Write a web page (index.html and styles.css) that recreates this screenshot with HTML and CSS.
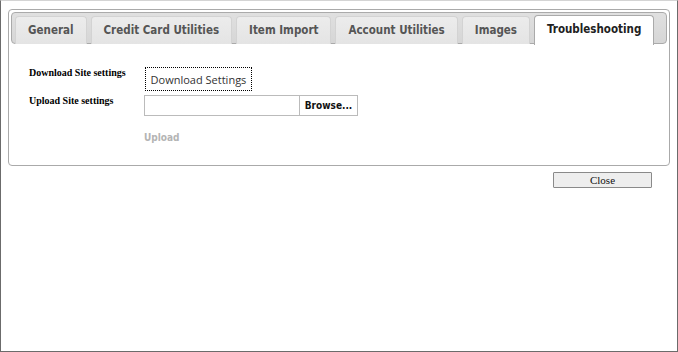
FILE: index.html
```html
<!DOCTYPE html>
<html>
<head>
<meta charset="utf-8">
<link rel="stylesheet" href="styles.css">
</head>
<body>
<div class="window">
  <div class="widget">
    <ul class="tabnav">
      <li class="tab">General</li>
      <li class="tab">Credit Card Utilities</li>
      <li class="tab">Item Import</li>
      <li class="tab">Account Utilities</li>
      <li class="tab">Images</li>
      <li class="tab active">Troubleshooting</li>
    </ul>
    <div class="panel">
      <div class="row">
        <div class="label">Download Site settings</div>
        <button class="dl-btn">Download Settings</button>
      </div>
      <div class="row">
        <div class="label">Upload Site settings</div>
        <div class="file">
          <span class="file-box"></span>
          <span class="browse">Browse...</span>
        </div>
      </div>
      <div class="row">
        <div class="label"></div>
        <span class="upload">Upload</span>
      </div>
    </div>
  </div>
  <div class="footer">
    <button class="close-btn">Close</button>
  </div>
</div>
</body>
</html>
```
FILE: styles.css
```css
html, body {
  margin: 0;
  padding: 0;
  background: #fff;
}
.window {
  box-sizing: border-box;
  width: 678px;
  height: 352px;
  border: 1px solid #6b6b6b;
  border-top-color: #d4d4d4;
  padding: 8px 7px 0 7px;
}
.widget {
  box-sizing: border-box;
  width: 662px;
  height: 157px;
  border: 1px solid #aaa;
  border-radius: 4px;
  padding: 2px;
}
.tabnav {
  box-sizing: border-box;
  list-style: none;
  margin: 0;
  height: 32px;
  padding: 3px 3px 0 3px;
  border: 1px solid #aaa;
  border-radius: 4px;
  background: linear-gradient(#e0e0e0, #d6d6d6);
  display: flex;
  gap: 4px;
  align-items: flex-start;
}
.tab {
  box-sizing: border-box;
  height: 28px;
  margin-bottom: -1px;
  padding: 0 12px;
  border: 1px solid #d3d3d3;
  border-bottom: 0;
  border-radius: 4px 4px 0 0;
  background: linear-gradient(#ececec, #e4e4e4);
  color: #555;
  font-family: "DejaVu Sans Condensed", "DejaVu Sans", sans-serif;
  font-stretch: condensed;
  font-weight: bold;
  font-size: 11.5px;
  line-height: 27px;
  white-space: nowrap;
}
.tab.active {
  height: 30px;
  margin-top: -1px;
  background: #fff;
  border-color: #aaa;
  color: #212121;
}
.panel {
  padding: 22px 0 0 18px;
}
.row {
  display: flex;
  align-items: flex-start;
  margin-bottom: 3px;
}
.label {
  width: 115px;
  flex: none;
  font-family: "Liberation Serif", serif;
  font-weight: bold;
  font-size: 10px;
  color: #000;
  padding-top: 1px;
}
.dl-btn {
  box-sizing: border-box;
  margin: 1px 0 0 1px;
  width: 107px;
  height: 24px;
  padding: 0;
  border: 1px dotted #000;
  background: #fff;
  color: #333;
  font-family: "Open Sans", "Noto Sans", sans-serif;
  font-size: 11px;
}
.file {
  display: flex;
  height: 21px;
  margin-top: 1px;
}
.file-box {
  box-sizing: border-box;
  width: 156px;
  height: 21px;
  border: 1px solid #bbb;
}
.browse {
  box-sizing: border-box;
  width: 58px;
  height: 21px;
  border: 1px solid #bbb;
  border-left: 0;
  text-align: center;
  font-family: "DejaVu Sans Condensed", "DejaVu Sans", sans-serif;
  font-stretch: condensed;
  font-weight: bold;
  font-size: 10px;
  line-height: 19px;
  color: #111;
}
.upload {
  margin-top: 13px;
  font-family: "DejaVu Sans Condensed", "DejaVu Sans", sans-serif;
  font-stretch: condensed;
  font-weight: bold;
  font-size: 10px;
  color: #b4b4b4;
}
.footer {
  display: flex;
  justify-content: flex-end;
  padding: 6px 18px 0 0;
}
.close-btn {
  box-sizing: border-box;
  width: 99px;
  height: 16px;
  padding: 0;
  border: 1px solid #8a8a8a;
  border-radius: 1px;
  background: #eee;
  color: #111;
  font-family: "Liberation Serif", serif;
  font-size: 11px;
  line-height: 14px;
}
```
